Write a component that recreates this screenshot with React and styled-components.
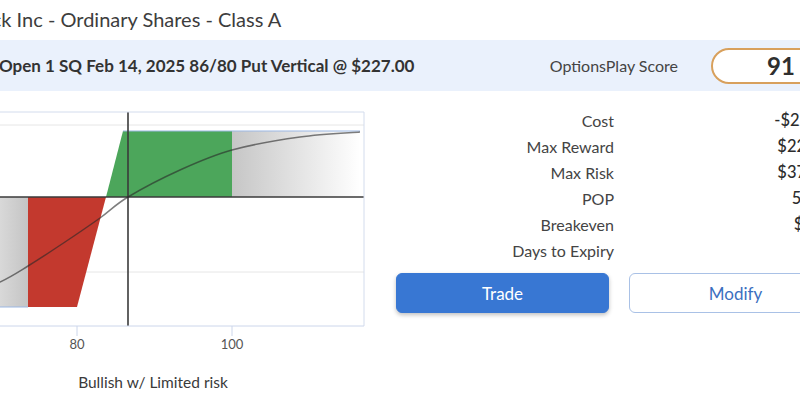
import React from "react"
import styled, { createGlobalStyle } from "styled-components"

const GlobalStyle = createGlobalStyle`
  html, body {
    margin: 0;
    padding: 0;
    background: #ffffff;
    overflow: hidden;
  }
  body {
    font-family: Lato, "Open Sans", sans-serif;
    width: 800px;
    height: 400px;
  }
`;

const Page = styled.div`
  width: 1046px;
  margin-left: -40px;
  display: flex;
  flex-direction: column;
`;

const Title = styled.h1`
  margin: 0;
  height: 40px;
  line-height: 38px;
  padding-left: 3px;
  font-size: 20px;
  font-weight: 400;
  color: #3d3d3d;
  white-space: nowrap;
`;

const StrategyBar = styled.div`
  height: 51px;
  background: #eaf1fc;
  display: flex;
  align-items: center;
  padding-left: 39px;
  padding-right: 155px;
`;

const StrategyText = styled.div`
  font-size: 17px;
  font-weight: 700;
  color: #333333;
  white-space: nowrap;
`;

const ScoreGroup = styled.div`
  margin-left: auto;
  display: flex;
  align-items: center;
  gap: 33px;
`;

const ScoreLabel = styled.span`
  font-size: 16px;
  color: #444444;
`;

const ScoreBox = styled.div`
  width: 140px;
  height: 36px;
  box-sizing: border-box;
  border: 2.5px solid #d8a05c;
  border-radius: 18px;
  display: flex;
  align-items: center;
  justify-content: center;
  font-size: 24px;
  font-weight: 700;
  color: #2f2f2f;
  background: #ffffff;
`;

const Main = styled.div`
  display: flex;
`;

const ChartColumn = styled.div`
  width: 436px;
  display: flex;
  flex-direction: column;
  padding-top: 9px;
`;

const Caption = styled.div`
  width: 420px;
  box-sizing: border-box;
  padding-right: 34px;
  margin-top: 14px;
  line-height: 20px;
  text-align: center;
  font-size: 15.5px;
  color: #3a3a3a;
`;

const InfoColumn = styled.div`
  width: 610px;
  padding-top: 16px;
  display: flex;
  flex-direction: column;
`;

const StatsGrid = styled.div`
  display: grid;
  grid-template-columns: 218px 388px;
  grid-auto-rows: 26px;
  align-items: center;
`;

const StatLabel = styled.div`
  text-align: right;
  font-size: 16px;
  color: #444444;
`;

const StatValue = styled.div`
  text-align: center;
  font-size: 16.5px;
  font-weight: 500;
  color: #2c2c2c;
`;

const ButtonRow = styled.div`
  margin-top: 10px;
  display: grid;
  grid-template-columns: 213px 213px;
  gap: 20px;
`;

const ActionButton = styled.button`
  height: 40px;
  border-radius: 6px;
  font-family: Lato, "Open Sans", sans-serif;
  font-size: 17px;
  cursor: pointer;
  border: 1px solid ${(p) => (p.$primary ? "#3877d3" : "#a9c1e6")};
  background: ${(p) => (p.$primary ? "#3877d3" : "#ffffff")};
  color: ${(p) => (p.$primary ? "#ffffff" : "#3b6fc0")};
  box-shadow: ${(p) => (p.$primary ? "0 2px 4px rgba(0,0,0,0.25)" : "none")};
`;

// smooth path through points (catmull-rom -> bezier)
const smoothPath = (pts) => {
  let d = `M${pts[0][0]},${pts[0][1]}`;
  for (let i = 0; i < pts.length - 1; i++) {
    const p0 = pts[i - 1] || pts[i];
    const p1 = pts[i];
    const p2 = pts[i + 1];
    const p3 = pts[i + 2] || p2;
    const c1x = p1[0] + (p2[0] - p0[0]) / 6;
    const c1y = p1[1] + (p2[1] - p0[1]) / 6;
    const c2x = p2[0] - (p3[0] - p1[0]) / 6;
    const c2y = p2[1] - (p3[1] - p1[1]) / 6;
    d += ` C${c1x},${c1y} ${c2x},${c2y} ${p2[0]},${p2[1]}`;
  }
  return d;
};

const curve = [
  [0, 198], [40, 182], [68, 166], [105, 142], [140, 118], [168, 97],
  [220, 70], [272, 50], [340, 37], [400, 32],
];

const PayoffChart = () => (
  <svg width="420" height="258" viewBox="0 0 420 258">
    <defs>
      <linearGradient id="fadeRight" x1="0" x2="1" y1="0" y2="0">
        <stop offset="0" stopColor="#c6c6c6" />
        <stop offset="1" stopColor="#ffffff" />
      </linearGradient>
      <linearGradient id="fadeLeft" x1="0" x2="1" y1="0" y2="0">
        <stop offset="0" stopColor="#f6f6f6" />
        <stop offset="1" stopColor="#c4c4c4" />
      </linearGradient>
    </defs>
    <line x1="0" y1="25" x2="404" y2="25" stroke="#e6e6e6" />
    <line x1="0" y1="172" x2="404" y2="172" stroke="#e6e6e6" />
    <rect x="272" y="31" width="128" height="66" fill="url(#fadeRight)" />
    <rect x="0" y="97" width="68" height="110" fill="url(#fadeLeft)" />
    <polygon points="163,31 272,31 272,97 146,97" fill="#4ca65b" />
    <polygon points="68,97 146,97 117,207 68,207" fill="#c3392e" />
    <line x1="163" y1="31" x2="400" y2="31" stroke="#9bb7e3" />
    <line x1="0" y1="207" x2="68" y2="207" stroke="#9bb7e3" />
    <line x1="0" y1="97" x2="404" y2="97" stroke="#3a3a3a" strokeWidth="1.6" />
    <line x1="168" y1="12" x2="168" y2="226" stroke="#3a3a3a" strokeWidth="1.6" />
    <path d={smoothPath(curve)} fill="none" stroke="rgba(40,40,40,0.6)" strokeWidth="1.5" />
    <line x1="0" y1="12" x2="404" y2="12" stroke="#d3dced" />
    <line x1="404" y1="12" x2="404" y2="226" stroke="#d3dced" />
    <line x1="0" y1="226" x2="404" y2="226" stroke="#ccd6eb" />
    <line x1="117" y1="226" x2="117" y2="236" stroke="#ccd6eb" />
    <line x1="272" y1="226" x2="272" y2="236" stroke="#ccd6eb" />
    <text x="117" y="249" textAnchor="middle" fontFamily="Lato, sans-serif" fontSize="13" fill="#555">80</text>
    <text x="272" y="249" textAnchor="middle" fontFamily="Lato, sans-serif" fontSize="13" fill="#555">100</text>
  </svg>
);

const stats = [
  { label: "Cost", value: "-$227.00" },
  { label: "Max Reward", value: "$227.00" },
  { label: "Max Risk", value: "$373.00" },
  { label: "POP", value: "56%" },
  { label: "Breakeven", value: "$84" },
  { label: "Days to Expiry", value: "7" },
];

export default function App() {
  return (
    <>
      <GlobalStyle />
      <Page>
        <Title>Block Inc - Ordinary Shares - Class A</Title>
        <StrategyBar>
          <StrategyText>Open 1 SQ Feb 14, 2025 86/80 Put Vertical @ $227.00</StrategyText>
          <ScoreGroup>
            <ScoreLabel>OptionsPlay Score</ScoreLabel>
            <ScoreBox>91</ScoreBox>
          </ScoreGroup>
        </StrategyBar>
        <Main>
          <ChartColumn>
            <PayoffChart />
            <Caption>Bullish w/ Limited risk</Caption>
          </ChartColumn>
          <InfoColumn>
            <StatsGrid>
              {stats.map((s) => (
                <React.Fragment key={s.label}>
                  <StatLabel>{s.label}</StatLabel>
                  <StatValue>{s.value}</StatValue>
                </React.Fragment>
              ))}
            </StatsGrid>
            <ButtonRow>
              <ActionButton $primary>Trade</ActionButton>
              <ActionButton>Modify</ActionButton>
            </ButtonRow>
          </InfoColumn>
        </Main>
      </Page>
    </>
  )
}
